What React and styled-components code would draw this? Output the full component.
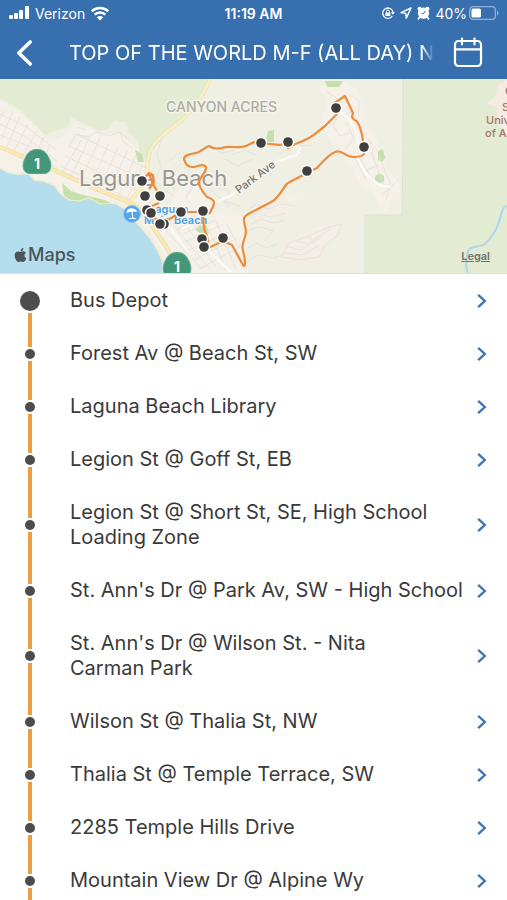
import styled, { createGlobalStyle } from "styled-components";
import { FaApple } from "react-icons/fa";

const GlobalStyle = createGlobalStyle`
  * {
    box-sizing: border-box;
  }
  body {
    margin: 0;
    background: #fff;
    color: #3a3a3a;
    font-family: Inter, "Liberation Sans", sans-serif;
  }
`;

const Screen = styled.div`
  display: flex;
  flex-direction: column;
  height: 100vh;
  overflow: hidden;
`;

const HeaderElem = styled.header`
  flex-shrink: 0;
  background: #386fae;
  color: #fff;
`;

const StatusBar = styled.div`
  display: grid;
  grid-template-columns: 1fr auto 1fr;
  align-items: center;
  height: 26px;
  padding: 0 8px;
  font-size: 14px;
`;

const StatusGroup = styled.div`
  display: flex;
  align-items: center;
  justify-content: ${({ $end }) => ($end ? "flex-end" : "flex-start")};
  gap: 5px;
  svg {
    flex-shrink: 0;
  }
`;

const BatteryInfo = styled.span`
  display: flex;
  align-items: center;
  gap: 2px;
`;

const Clock = styled.time`
  font-size: 14px;
  font-weight: 600;
`;

const NavBar = styled.div`
  display: flex;
  align-items: center;
  height: 53px;
  padding: 0 20px 0 12px;
`;

const IconButton = styled.button`
  display: flex;
  flex-shrink: 0;
  padding: 0;
  border: 0;
  background: none;
  color: inherit;
  cursor: pointer;
`;

const Title = styled.h1`
  flex: 1;
  min-width: 0;
  margin: 0 17px 0 33px;
  overflow: hidden;
  font-size: 20px;
  line-height: 28px;
  font-weight: 400;
  white-space: nowrap;
  mask-image: linear-gradient(to right, #000 calc(100% - 12px), transparent);
`;

const MapArea = styled.section`
  position: relative;
  flex-shrink: 0;
  height: 195px;
  border-bottom: 1px solid #dcdfd2;
  overflow: hidden;
  > svg {
    display: block;
    width: 100%;
    height: 100%;
  }
`;

const MapsBrand = styled.div`
  position: absolute;
  left: 13px;
  bottom: 6px;
  display: flex;
  align-items: center;
  color: #4b5459;
  font-size: 18px;
  line-height: 24px;
  font-weight: 500;
  svg {
    width: 15px;
    height: 16px;
  }
`;

const LegalLink = styled.a`
  position: absolute;
  right: 17px;
  bottom: 9px;
  color: #70756a;
  font-size: 11px;
  line-height: 16px;
  font-weight: 600;
`;

const StopList = styled.ol`
  flex: 1;
  min-height: 0;
  margin: 0;
  padding: 0;
  overflow-y: auto;
  list-style: none;
  scrollbar-width: none;
`;

const StopLink = styled.a`
  display: flex;
  align-items: stretch;
  padding: 0 18px 0 20px;
  color: inherit;
  text-decoration: none;
  > svg {
    align-self: center;
    flex-shrink: 0;
  }
`;

const Rail = styled.span`
  display: flex;
  flex-direction: column;
  flex-shrink: 0;
  align-items: center;
  width: 20px;
`;

const RailLine = styled.span`
  flex: 1;
  width: 4px;
  background: ${({ $hidden }) => ($hidden ? "transparent" : "#e99d45")};
`;

const RailDot = styled.span`
  width: ${({ $first }) => ($first ? "20px" : "10px")};
  height: ${({ $first }) => ($first ? "20px" : "10px")};
  margin: 2px 0;
  border-radius: 50%;
  background: #4d4d4d;
`;

const StopName = styled.span`
  flex: 1;
  padding: 14px 0 14px 30px;
  font-size: 20px;
  line-height: 25px;
`;

const stops = [
  "Bus Depot",
  "Forest Av @ Beach St, SW",
  "Laguna Beach Library",
  "Legion St @ Goff St, EB",
  "Legion St @ Short St, SE, High School Loading Zone",
  "St. Ann's Dr @ Park Av, SW - High School",
  "St. Ann's Dr @ Wilson St. - Nita Carman\u00a0Park",
  "Wilson St @ Thalia St, NW",
  "Thalia St @ Temple Terrace, SW",
  "2285 Temple Hills Drive",
  "Mountain View Dr @ Alpine Wy",
];

const mapStops = [
  [142, 102],
  [145, 117],
  [160, 117],
  [147, 131],
  [164, 145],
  [151, 134],
  [160, 145],
  [181, 133],
  [203, 132],
  [202, 160],
  [204, 168],
  [223, 159],
  [261, 64],
  [288, 63],
  [336, 29],
  [364, 68],
  [307, 92],
];

function SignalIcon() {
  return (
    <svg width="22" height="14" viewBox="0 0 22 14" fill="#fff" aria-hidden="true">
      <rect x="1" y="9" width="4" height="4" rx="1" />
      <rect x="6" y="7" width="4" height="6" rx="1" />
      <rect x="11" y="4" width="4" height="9" rx="1" />
      <rect x="17" y="0" width="4" height="13" rx="1" />
    </svg>
  );
}

function WifiIcon() {
  return (
    <svg width="20" height="15" viewBox="0 0 20 15" fill="none" stroke="#fff" aria-hidden="true">
      <path d="M1.7 5.4a12 12 0 0 1 16.6 0" strokeWidth="2.6" />
      <path d="M4.7 8.7a7.6 7.6 0 0 1 10.6 0" strokeWidth="2.5" />
      <path d="M10 14.5 6.8 11.2a4.6 4.6 0 0 1 6.4 0z" fill="#fff" stroke="none" />
    </svg>
  );
}

function RotationLockIcon() {
  return (
    <svg width="14" height="14" viewBox="0 0 14 14" fill="none" stroke="#fff" aria-hidden="true">
      <path d="M11.2 10.2A5.2 5.2 0 1 1 12 6" strokeWidth="1.3" />
      <path d="m9.8 6.2 2.1 2.5 2.1-2.5z" fill="#fff" stroke="none" />
      <rect x="4.4" y="6.4" width="5" height="3.6" rx=".5" fill="#fff" stroke="none" />
      <path d="M5.5 6.5V5.4a1.4 1.4 0 0 1 2.8 0v1.1" />
    </svg>
  );
}

function LocationIcon() {
  return (
    <svg width="12" height="12" viewBox="0 0 12 12" fill="none" stroke="#fff" aria-hidden="true">
      <path d="M11 1 1 5.6l4.7.7.6 4.8z" strokeWidth="1.4" strokeLinejoin="round" />
    </svg>
  );
}

function AlarmIcon() {
  return (
    <svg width="13" height="14" viewBox="0 0 13 14" fill="none" aria-hidden="true">
      <circle cx="2.6" cy="2.8" r="2.100" fill="#fff" />
      <circle cx="10.4" cy="2.8" r="2.100" fill="#fff" />
      <circle cx="6.5" cy="7.2" r="5.6" fill="#fff" />
      <path d="m2.7 11-1.2 1.700M10.3 11l1.200 1.700" stroke="#fff" strokeWidth="1.8" strokeLinecap="round" />
      <path d="M8.500 4.800 6.5 7.600H4.500" stroke="#386fae" strokeWidth="1" />
    </svg>
  );
}

function BatteryIcon() {
  return (
    <svg width="30" height="14" viewBox="0 0 30 14" aria-hidden="true">
      <rect x=".7" y=".7" width="25.6" height="12.6" rx="3.4" fill="none" stroke="#8fb1d5" strokeWidth="1.3" />
      <path d="M28 4.6c2 .8 2 4 0 4.8z" fill="#8fb1d5" />
      <rect x="2.5" y="2.5" width="9.5" height="9" rx="1.6" fill="#fff" />
    </svg>
  );
}

function BackIcon() {
  return (
    <svg width="24" height="30" viewBox="0 0 24 30" fill="none" aria-hidden="true">
      <path
        d="M18.2 4 6.8 15l11.4 11"
        stroke="#fff"
        strokeWidth="3.6"
        strokeLinecap="round"
        strokeLinejoin="round"
      />
    </svg>
  );
}

function CalendarIcon() {
  return (
    <svg
      width="36"
      height="32"
      viewBox="0 0 36 32"
      fill="none"
      stroke="#fff"
      strokeWidth="2.2"
      strokeLinecap="round"
      aria-hidden="true"
    >
      <rect x="4" y="4" width="26" height="25" rx="3.5" />
      <path d="M4 12.3h26M11 1.5v6M23.5 1.5v6" />
    </svg>
  );
}

function ChevronIcon() {
  return (
    <svg width="14" height="16" viewBox="0 0 14 16" fill="none" aria-hidden="true">
      <path d="m3.2 1.8 6.6 6.2-6.6 6.2" stroke="#3973b8" strokeWidth="2.3" />
    </svg>
  );
}

function RouteShield({ x, y }) {
  const outline =
    "M0-13.5c6 0 9 3 11 7 2.5 4 3.5 8 2.5 12-1 3.5-3 5-7 5h-13c-4 0-6-1.5-7-5-1-4 0-8 2.500-12 2-4 5-7 11-7z";
  return (
    <g transform={`translate(${x} ${y})`}>
      <path d={outline} fill="#439778" stroke="#e6f0e4" strokeWidth="3" />
      <path d={outline} fill="#439778" stroke="#5fa78b" />
      <text y="6" fill="#fff" fontSize="14" fontWeight="700" textAnchor="middle">
        1
      </text>
    </g>
  );
}

function RouteMap() {
  return (
    <svg viewBox="0 0 507 194" preserveAspectRatio="xMidYMin slice" role="img" aria-label="Route map">
      <rect width="507" height="196" fill="#eff0e3" />

      {/* open land */}
      <g fill="#e4ebd3">
        <path d="M0 0h211l-14 24-17 18-17 12-12 14-4 14-8-9-1-12-9-7-2-10-13-3-5 9-10 2-14-7-14-6-3 9-13 4-10 4-11-11-16-16L0 19z" />
        <path d="M402 0h105v196H365v-60h38V76z" />
      </g>
      <path d="M403 0v77l-1 59h-37v60" fill="none" stroke="#dce2ce" />

      {/* neighbourhoods */}
      <g fill="#f5f1e9">
        <path d="m0 22 18 11 18 14 14 16 12-5 13-14 14 5 13 9 16-5 8 6 9 8 6 13 8 8v45l27 31 27 37h-18l-14-26-20-24-20-7-34-7-22-8-22-12-33-15L0 89z" />
        <path d="m190 95 17 14 8 24 26 4 6 20-2 39h-70l-25-42z" />
        <path d="m323 4 20-1 13 6 8 17 1 19 12 16 10 29 13 16 1 12-11 3-2 12-7-4-8-16-15-10-7-18-16-16-15-24 8-23-8-11z" />
      </g>
      <path
        d="m251 127 24-12 18 2 20-5-24 20-30 13M278 180l9-19 20-8 22-9 12 1-5 16-10 7-9 19-20-3z"
        fill="#f3efe7"
      />
      <path d="m498 6 9-6v56l-9-10-1-18-11-3 9-7z" fill="#f4ece3" />

      {/* parks */}
      <g fill="#c4e0ad">
        <path d="M325 2h18l-4 6h-12zM268 52l6-1v12h-8zM378 72l5-2 2 9-3 4-4-2zM375 98l4-4 5 3v6l-9 1z" />
        <path d="m9 96 9 1-6 8-4-3zM62 104l9 8 12 4 22 5 10 5-16 1-12-6-14 3-9-7z" />
        <path d="m195 150 10-8 4 12-4 5zM135 71l7 4 2 8-6 0z" />
      </g>

      {/* ocean */}
      <path
        d="m0 90 8 4 10 2 10-1 7 7 9 1 10 4 7 9 9 6 9 1 10-3 11 6 15-1 9 5 7 9 10 10 9 11 7 11 6 14 5 11H0z"
        fill="#b4dded"
      />
      <path
        d="m0 89 8 4 10 2 10-1 7 7 9 1 10 4 7 9 9 6 9 1 10-3 11 6 15-1 9 5 7 9 10 10 9 11 7 11 6 14"
        fill="none"
        stroke="#f3ebc8"
        strokeWidth="1.2"
      />

      {/* small streets */}
      <g fill="none" stroke="#e5e0d9" strokeWidth=".9" strokeLinejoin="round">
        <path d="m0 35 27 13 29 23M0 45l26 13 32 25M0 56l31 12 27 22M5 30 0 39M13 32 1 61M20 37 7 68M28 45 14 72M37 52 22 78M44 58 31 83M50 65 42 86" />
        <path d="m69 67 76 34M65 77l73 35M61 87l68 33M78 56l68 33M81 61 62 94M90 58 70 99M100 59 80 103M109 64 90 107M118 68 99 111M127 72 108 115M136 76 118 118M143 85 127 120" />
        <path d="m69 67 7-12 12 3 9-5 13 4 9-4 12 9M77 48l9 3M120 53l3 9 10 8" />
        <path d="m157 142 45 48M166 137l43 52M177 134l39 54M183 155l33-14M176 151l24-12M180 165l42-19M187 172l42-19M193 181l45-22M199 190l43-23M216 143l20 47M226 144l13 24M209 150l17 41" />
        <path d="m161 61-4 15 4 12-6 14 18 15M165 84l16-11M174 111l-2-15 9-12M180 104l8-9 4 10-5 12M196 104l-10 14 5 8" />
        <path d="m211 91 9 8-4 8 13 7M215 101l15 12-5 9 15 5M208 109l22 19M222 89l10 10M225 80l12 7M211 69l12 5 11-3M232 76l13-5 11 5M238 87l16-8M279 75l17-8 16-1" />
        <path d="m249 130 8-5 10 5 14-5 14 2M250 137l9-4 10 5 17-4M251 145l10-5 12 4 12-3M249 151l11-3 13 4-9 10M247 170l10-6 9 5 11-4M244 184l14-8 16 3 12-5M282 108l14-12" />
        <path d="m281 178 8-14 20-7 20-9 13-3-5 12-11 8-7 13-19 3zM286 167l15 4 20-13M294 161l13 4 23-15M287 174l15 2 18-10M309 157l7 10" />
        <path d="m326 12 17 12 8-8 9 7-2 13M330 23l14 13 10-4M338 38l-5 8 7 11 9-3M346 43l8 17-9 10M354 76l12 25M359 78l14 23 13 5M371 73l12 31M379 77l11 27M368 60l9 12M365 92l14-6M382 116l9-8 7-7M386 121l4-16" />
      </g>
      <g fill="none" stroke="#fbfaf6" strokeWidth="2.2" strokeLinejoin="round">
        <path d="m213 125 18-9 19-11 25-22 22-7 3-7-10-5-2-7M337 29l13 12 6 11 3 17M355 75l11 20 13 11 12 2" />
        <path d="m161 136 28 38M202 141l-21 9M208 171l23 22" />
      </g>

      {/* main roads */}
      <g fill="none" strokeLinejoin="round">
        <path
          d="M210 0c-6 15-13 25-24 37-11 12-28 18-36 35-5 13 1 24-12 41l-11 13"
          stroke="#e6ddb8"
          strokeWidth="4"
        />
        <path
          d="M210 0c-6 15-13 25-24 37-11 12-28 18-36 35-5 13 1 24-12 41l-11 13"
          stroke="#faf0be"
          strokeWidth="2.8"
        />
        <path
          d="m0 68 28 12 35 15 31 14 34 14 9 5 15 19 15 22 15 27"
          stroke="#e9dab0"
          strokeWidth="4.2"
        />
        <path
          d="m0 68 28 12 35 15 31 14 34 14 9 5 15 19 15 22 15 27"
          stroke="#fbe9b1"
          strokeWidth="3"
        />
      </g>
      <path
        d="M507 127c-3 1-5 4-6 9-3 13-8 22-16 29-6 4-14 1-17 7-2 7-3 14 0 24"
        fill="none"
        stroke="#a9d8ec"
        strokeWidth="2"
      />

      {/* place names */}
      <g stroke="#f5f3ea" strokeWidth="3" paintOrder="stroke" strokeLinejoin="round">
        <text x="166" y="33" fontSize="14" fontWeight="500" fill="#acada6">
          CANYON ACRES
        </text>
        <text x="79" y="107" fontSize="22" fill="#979592">
          Laguna Beach
        </text>
        <text x="149" y="134" fontSize="11" fontWeight="600" fill="#4d9fe8">
          Laguna
        </text>
        <text x="144" y="145" fontSize="11" fontWeight="600" fill="#4d9fe8">
          Main
        </text>
        <text x="174" y="145" fontSize="11" fontWeight="600" fill="#4d9fe8">
          Beach
        </text>
        <text x="239" y="115" fontSize="11" fontWeight="500" fill="#77756f" transform="rotate(-37 239 115)">
          Park Ave
        </text>
      </g>
      <g fontSize="11" fontWeight="500" fill="#a37468">
        <text x="505" y="16">O</text>
        <text x="502" y="32">S</text>
        <text x="486" y="45">Univ</text>
        <text x="485" y="58">of A</text>
      </g>

      {/* beach marker */}
      <circle cx="132" cy="135" r="8.5" fill="#52a6ec" stroke="#8fc6f1" />
      <path d="M126.500 134c0-5 7-7 11-1.500l-2.500.300-2.200-.4-3 .6z" fill="#fff" />
      <path d="m132 132 .8 7M129 139.500h7" stroke="#fff" strokeWidth="1.2" />

      <RouteShield x={37} y={84} />
      <RouteShield x={177} y={187} />

      {/* bus route */}
      <g fill="none" stroke="#ed8c3b" strokeWidth="2.2" strokeLinejoin="round">
        <path d="m146 97 3-3 4 2 1 7-5 7M149 95l4 10 7 12M152 127l7-3M151 134l9 11 8-4 13-8h22" />
        <path d="M288 63c-6 5-13 2-27 1-7-3-10 1-15 3-8 3-17-1-24 2-5 1-9 1-13-2-4 1-8 6-13 7-6 1-12 2-12 6 1 4 3 8 8 8 5 1 10-5 14 0 1 5-5 8-7 15 0 6 4 10 8 15 3 1 7 2 7 6 0 4-3 6-4 10l-7 1 1 13c0 5 4 8 4 15l-4 8 19-9 9 4 11 20q2 3 2-3c0-8-4-12-2-19 2-6 4-10 2-17-2-8-2-9 5-13l23-12c8-6 11-15 15-18l19-10 10-5c6-7 13-14 18-16 7-3 10 5 18 5q9 0 11-3c0-9-2-24-6-31-2-4-5-2-6-6l1-4-8-17-12 8 4 10-12 12c-8 6-12 11-20 14-9 4-13 5-17 8z" />
      </g>
      <g fill="#3f3f3f" stroke="#fbfaf5" strokeWidth="3" paintOrder="stroke">
        {mapStops.map(([x, y]) => (
          <circle key={`${x}-${y}`} cx={x} cy={y} r="4.800" />
        ))}
      </g>
    </svg>
  );
}

function Header() {
  return (
    <HeaderElem>
      <StatusBar>
        <StatusGroup>
          <SignalIcon />
          <span>Verizon</span>
          <WifiIcon />
        </StatusGroup>
        <Clock>11:19 AM</Clock>
        <StatusGroup $end>
          <RotationLockIcon />
          <LocationIcon />
          <AlarmIcon />
          <BatteryInfo>
            40%
            <BatteryIcon />
          </BatteryInfo>
        </StatusGroup>
      </StatusBar>
      <NavBar>
        <IconButton type="button" aria-label="Back">
          <BackIcon />
        </IconButton>
        <Title>TOP OF THE WORLD M-F (ALL DAY) N</Title>
        <IconButton type="button" aria-label="Schedule">
          <CalendarIcon />
        </IconButton>
      </NavBar>
    </HeaderElem>
  );
}

function Stop({ name, first }) {
  return (
    <li>
      <StopLink href="#stop">
        <Rail>
          <RailLine $hidden={first} />
          <RailDot $first={first} />
          <RailLine />
        </Rail>
        <StopName>{name}</StopName>
        <ChevronIcon />
      </StopLink>
    </li>
  );
}

function App() {
  return (
    <Screen>
      <GlobalStyle />
      <Header />
      <MapArea>
        <RouteMap />
        <MapsBrand>
          <FaApple aria-hidden="true" />
          Maps
        </MapsBrand>
        <LegalLink href="#legal">Legal</LegalLink>
      </MapArea>
      <StopList>
        {stops.map((name, i) => (
          <Stop key={name} name={name} first={i === 0} />
        ))}
      </StopList>
    </Screen>
  );
}

export default App;
